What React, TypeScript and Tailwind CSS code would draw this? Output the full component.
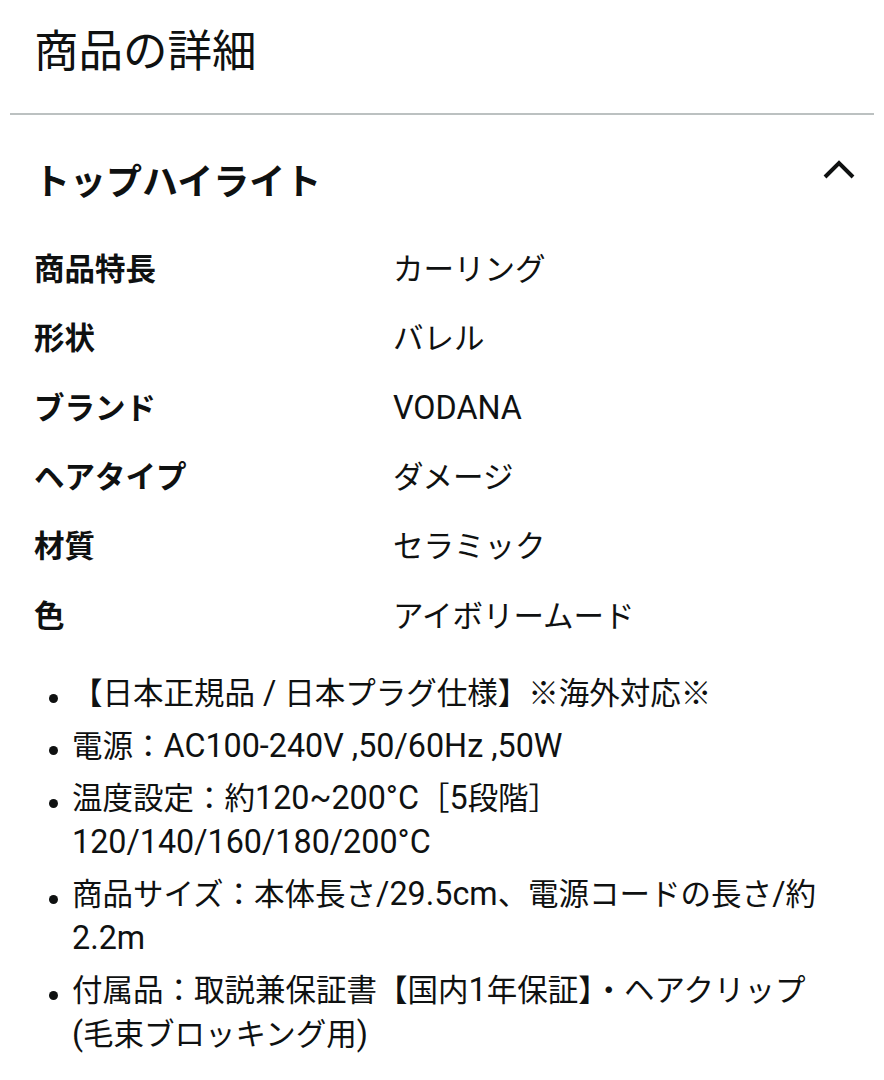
import React from "react";

const rows: [string, string][] = [
  ["商品特長", "カーリング"],
  ["形状", "バレル"],
  ["ブランド", "VODANA"],
  ["ヘアタイプ", "ダメージ"],
  ["材質", "セラミック"],
  ["色", "アイボリームード"],
];

const bullets: string[][] = [
  ["【日本正規品 / 日本プラグ仕様】※海外対応※"],
  ["電源：AC100-240V ,50/60Hz ,50W"],
  ["温度設定：約120~200°C［5段階］", "120/140/160/180/200°C"],
  ["商品サイズ：本体長さ/29.5cm、電源コードの長さ/約", "2.2m"],
  ["付属品：取説兼保証書【国内1年保証】・ヘアクリップ", "(毛束ブロッキング用)"],
];

const cjk = /[\u2000-\u206f\u203b\u3000-\u9fff\uff00-\uffef]/;

function Mixed({ text, bold }: { text: string; bold?: boolean }) {
  const parts: { s: string; c: boolean }[] = [];
  for (const ch of text) {
    const c = cjk.test(ch);
    const last = parts[parts.length - 1];
    if (last && last.c === c) last.s += ch;
    else parts.push({ s: ch, c });
  }
  return (
    <>
      {parts.map((p, i) =>
        p.c ? (
          <span key={i} className={bold ? "text-[30.5px] font-bold" : "text-[30.5px]"}>
            {p.s}
          </span>
        ) : (
          <span key={i} className={bold ? "text-[32.3px] font-bold" : "text-[32.3px]"}>
            {p.s}
          </span>
        )
      )}
    </>
  );
}

export default function App() {
  return (
    <div
      className="w-[884px] min-h-[1080px] bg-white text-[#0f1111]"
      style={{ fontFamily: 'Roboto, "Noto Sans CJK JP", sans-serif' }}
    >
      <div className="h-[113px] pl-[34px] pt-[22px]">
        <h1 className="text-[44.5px] leading-[60px] font-normal">商品の詳細</h1>
      </div>
      <div className="mx-[10px] h-[2px] bg-[#bcc1c1]" />
      <div className="flex items-center justify-between pl-[34px] pr-[28px] pt-[12px] h-[123px]">
        <h2 className="text-[36px] font-bold leading-[50px]">トップハイライト</h2>
        <svg width="34" height="22" viewBox="0 0 34 22" className="mb-[27px]">
          <path d="M3 19 L17 5 L31 19" fill="none" stroke="#0f1111" strokeWidth="4" />
        </svg>
      </div>
      <div className="pl-[34px]">
        {rows.map(([k, v]) => (
          <div key={k} className="flex items-center h-[69.3px] leading-[44px]">
            <div className="w-[359px] h-[44px] flex items-center">
              <div>
                <Mixed text={k} bold />
              </div>
            </div>
            <div className="h-[44px] flex items-center">
              <div>
                <Mixed text={v} />
              </div>
            </div>
          </div>
        ))}
      </div>
      <ul className="pl-[72px] pr-[10px] pt-[21px] leading-[43.5px]">
        {bullets.map((lines) => (
          <li key={lines[0]} className="relative mb-[9px] whitespace-nowrap">
            <span className="absolute left-[-23px] top-[19px] w-[9px] h-[9px] rounded-full bg-[#0f1111]" />
            {lines.map((l, i) => (
              <div key={i} className="h-[43.5px] flex items-center">
                <div>
                  <Mixed text={l} />
                </div>
              </div>
            ))}
          </li>
        ))}
      </ul>
    </div>
  );
}
